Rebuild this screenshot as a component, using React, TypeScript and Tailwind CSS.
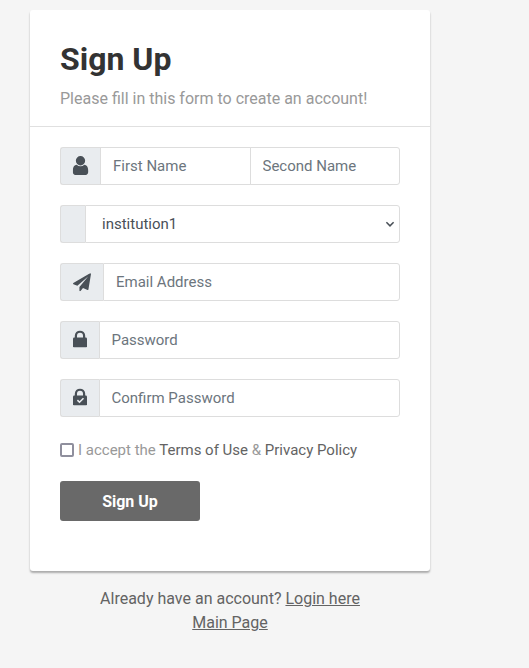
import type { ReactNode } from "react";

const input = "min-w-0 flex-1 h-[38px] border border-[#dddddd] bg-white px-3 text-[15px] text-[#495057] placeholder:text-[#6c757d] placeholder:opacity-100 outline-none rounded-r-[3px]";

function Group({ icon, width, children }: { icon?: ReactNode; width: string; children: ReactNode }) {
  return (
    <div className="mb-5 flex h-[38px]">
      <span className={`${width} flex shrink-0 items-center rounded-l-[3px] border border-r-0 border-[#dddddd] bg-[#e9ecef] pl-3 text-[#495057]`}>{icon}</span>
      {children}
    </div>
  );
}

function UserIcon() {
  return (
    <svg className="h-[19px] w-[15.5px] shrink-0 -translate-x-[0.25px] -translate-y-px" viewBox="256 128 1280 1536" fill="currentColor" preserveAspectRatio="none">
      <path d="M1536 1399q0 109-62.5 187t-150.5 78h-854q-88 0-150.5-78t-62.5-187q0-85 8.5-160.5t31.5-152 58.5-131 94-89 134.5-34.5q131 128 313 128t313-128q76 0 134.5 34.5t94 89 58.5 131 31.5 152 8.5 160.5zm-256-887q0 159-112.5 271.5t-271.5 112.5-271.5-112.5-112.5-271.5 112.5-271.5 271.5-112.5 271.5 112.5 112.5 271.5z" />
    </svg>
  );
}

function PlaneIcon() {
  return (
    <svg className="h-[18px] w-[18px] translate-y-[0.25px]" viewBox="0 0 1792 1792" fill="currentColor">
      <path d="M1764 11q33 24 27 64l-256 1536q-5 29-32 45-14 8-31 8-11 0-24-5l-453-185-242 295q-18 23-49 23-13 0-22-4-19-7-30.5-23.5t-11.5-36.5v-349l864-1059-1069 925-395-162q-37-14-40-55-2-40 32-59l1664-960q15-9 32-9 20 0 36 11z" />
    </svg>
  );
}

function LockIcon({ checked = false }: { checked?: boolean }) {
  return (
    <svg className="h-[17px] w-[14px] -translate-y-[1.5px]" viewBox="0 0 14 17" fill="none">
      <rect y="7" width="14" height="10" rx="1.2" fill="currentColor" />
      <path d="M2.9 8V5.2a4.1 4.1 0 0 1 8.2 0V8" stroke="currentColor" strokeWidth="2.2" />
      {checked && <path d="m4.4 11.6 2.1 2.1 4-4" stroke="#e9ecef" strokeWidth="1.6" />}
    </svg>
  );
}

export default function App() {
  return (
    <div className="h-[668px] w-[529px] overflow-hidden bg-[#f5f5f5] pl-[30px] pt-2.5 font-['Roboto',sans-serif] text-base leading-6 text-[#636363]">
      <div className="w-[400px]">
        <form className="h-[561px] rounded-[3px] bg-white p-[30px] text-[15px] text-[#999] shadow-[0_2px_2px_rgba(0,0,0,0.3)]">
          <h2 className="text-[32px] font-bold leading-[38.4px] text-[#333]">Sign Up</h2>
          <p className="mt-[9px] text-base leading-6">Please fill in this form to create an account!</p>
          <hr className="-mx-[30px] mb-5 mt-[15px] border-[#e0e0e0]" />
          <Group width="w-10" icon={<UserIcon />}>
            <input className="h-[38px] w-[151px] border border-[#ddd] bg-white px-3 text-[15px] outline-none placeholder:text-[#6c757d]" placeholder="First Name" />
            <input className={`${input} -ml-px pl-[11.5px]`} placeholder="Second Name" />
          </Group>
          <Group width="w-[25px]">
            <div className="relative flex min-w-0 flex-1">
              <select className={`${input} appearance-none pl-4`}><option>institution1</option></select>
              <svg className="pointer-events-none absolute right-[5px] top-4" width="10" height="7" viewBox="0 0 10 7" fill="none" stroke="#495057" strokeWidth="1.5"><path d="m1.4 1.3 3.6 3.6 3.6-3.6" /></svg>
            </div>
          </Group>
          <Group width="w-[43px]" icon={<PlaneIcon />}><input className={input} placeholder="Email Address" /></Group>
          <Group width="w-[39px]" icon={<LockIcon />}><input className={`${input} pl-[11.5px]`} placeholder="Password" /></Group>
          <Group width="w-[39px]" icon={<LockIcon checked />}><input className={`${input} pl-[11.5px]`} placeholder="Confirm Password" /></Group>
          <label className="mt-[22px] flex h-[22px] items-center whitespace-pre"><input type="checkbox" className="mr-1 h-[14px] w-[14px] appearance-none rounded-[2px] border-2 border-[#8f8f9d] bg-white checked:bg-[#696969]" /><span>I accept the <span className="text-[#636363]">Terms of Use</span> &amp; <span className="text-[#636363]">Privacy Policy</span></span></label>
          <button type="button" className="mt-5 h-10 w-[140px] rounded-[3px] bg-[#696969] pt-px text-base font-bold text-white">Sign Up</button>
        </form>
        <div className="mt-4 text-center">Already have an account? <a className="underline">Login here</a><br /><a className="underline">Main Page</a></div>
      </div>
    </div>
  );
}
